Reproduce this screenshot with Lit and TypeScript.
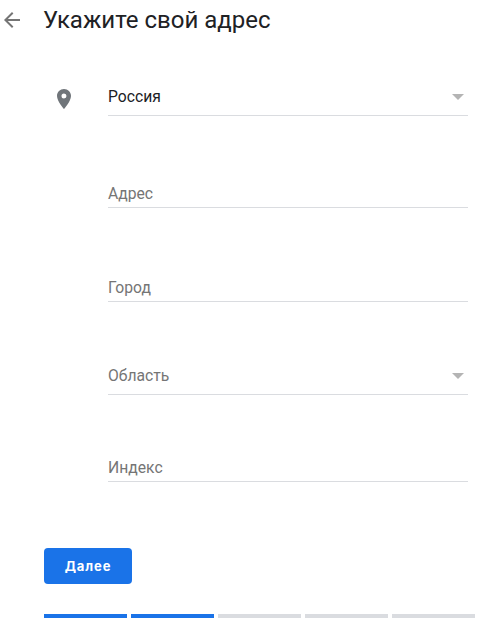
import { LitElement, html, css } from "lit";
import { customElement } from "lit/decorators.js";

const FONT = css`Roboto, "Noto Sans", sans-serif`;

@customElement("app-root")
export class AppRoot extends LitElement {
  static styles = css`
    :host { display: block; width: 479px; height: 621px; overflow: hidden; background: #fff; font-family: ${FONT}; }
    .head { display: flex; align-items: center; height: 40px; }
    .back { width: 44px; flex: none; display: flex; box-sizing: border-box; }
    h1 { margin: 0 0 0 -1px; font: 400 24px/40px ${FONT}; color: #202124; }
    .form { display: flex; flex-direction: column; padding: 0 11px 0 44px; margin-top: 36px; }
    .row { display: flex; }
    .pin { width: 64px; flex: none; display: flex; padding-left: 8px; padding-top: 11px; box-sizing: border-box; }
    .field { flex: 1; display: flex; align-items: center; justify-content: space-between; height: 40px; box-sizing: border-box; border-bottom: 1px solid #dadce0; font-size: 15.7px; color: #757575; padding-top: 2px; }
    .field.val { color: #202124; }
    .field.low { padding-top: 12px; }
    .r2 { margin-top: 52px; } .r3 { margin-top: 54px; } .r4 { margin-top: 53px; } .r5 { margin-top: 47px; }
    .arrow { width: 0; height: 0; border-left: 6.5px solid transparent; border-right: 6.5px solid transparent; border-top: 6.5px solid #b4b4b4; margin-right: 4px; }
    button { display: block; margin: 66px 0 0 44px; width: 88px; height: 36px; border: 0; border-radius: 4px; background: #1a73e8; color: #fff; font: 700 13px/36px Inter, ${FONT}; letter-spacing: 0.9px; padding: 0; }
    .steps { display: flex; gap: 4px; margin: 30px 0 0 44px; }
    .steps i { display: block; width: 83px; height: 4px; background: #dadce0; }
    .steps i.on { background: #1a73e8; }
  `;
  render() {
    return html`
      <div class="head">
        <div class="back">
          <svg width="24" height="24" viewBox="0 0 24 24"><path fill="#757575" d="M20 11H7.83l5.59-5.59L12 4l-8 8 8 8 1.41-1.41L7.83 13H20z"/></svg>
        </div>
        <h1>Укажите свой адрес</h1>
      </div>
      <div class="form">
        <div class="row">
          <div class="pin"><svg width="24" height="24" viewBox="0 0 24 24"><path fill="#70757a" d="M12 2C8.13 2 5 5.13 5 9c0 5.25 7 13 7 13s7-7.75 7-13c0-3.87-3.13-7-7-7zm0 9.5a2.5 2.5 0 1 1 0-5 2.5 2.5 0 0 1 0 5z"/></svg></div>
          <div class="field val"><span>Россия</span><span class="arrow"></span></div>
        </div>
        <div class="row r2"><div class="pin"></div><div class="field low"><span>Адрес</span></div></div>
        <div class="row r3"><div class="pin"></div><div class="field low"><span>Город</span></div></div>
        <div class="row r4"><div class="pin"></div><div class="field"><span>Область</span><span class="arrow"></span></div></div>
        <div class="row r5"><div class="pin"></div><div class="field low"><span>Индекс</span></div></div>
      </div>
      <button>Далее</button>
      <div class="steps"><i class="on"></i><i class="on"></i><i></i><i></i><i></i></div>
    `;
  }
}
